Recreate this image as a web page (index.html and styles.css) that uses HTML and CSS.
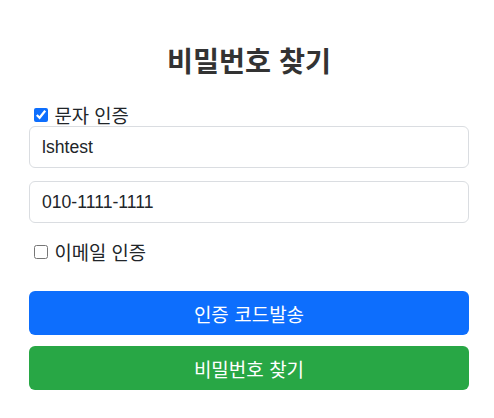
FILE: index.html
```html
<!DOCTYPE html>
<html lang="ko">
<head>
<meta charset="utf-8">
<link rel="stylesheet" href="styles.css">
</head>
<body>
<div class="wrap">
  <h2 class="title">비밀번호 찾기</h2>
  <form class="form">
    <label class="check-row"><input type="checkbox" class="check" checked> 문자 인증</label>
    <input type="text" class="field" value="lshtest">
    <input type="text" class="field field-gap" value="010-1111-1111">
    <label class="check-row check-email"><input type="checkbox" class="check"> 이메일 인증</label>
    <button type="button" class="btn btn-primary">인증 코드발송</button>
    <button type="button" class="btn btn-success">비밀번호 찾기</button>
  </form>
</div>
</body>
</html>
```

FILE: styles.css
```css
* { box-sizing: border-box; }
html, body { margin: 0; background: #fff; }
body {
  font-family: "Noto Sans CJK KR", "Noto Sans", "Liberation Sans", sans-serif;
  font-size: 18.8px;
  color: #212529;
}
.wrap {
  width: 440px;
  margin-left: 29px;
  padding-top: 43px;
}
.title {
  margin: 0 0 27px;
  text-align: center;
  font-size: 28.3px;
  font-weight: 700;
  color: #333;
  line-height: 1.2;
}
.form {
  display: flex;
  flex-direction: column;
}
.check-row {
  display: flex;
  align-items: center;
  line-height: 22px;
  height: 22px;
  color: #212529;
}
.check {
  width: 14px;
  height: 14px;
  margin: 0 7px 0 4.5px;
  accent-color: #0d6efd;
}
.field {
  height: 42.5px;
  margin-top: 0;
  padding: 0 12px;
  font-family: "Liberation Sans", Arial, sans-serif;
  font-size: 17.6px;
  color: #212529;
  border: 1px solid #dadde1;
  border-radius: 6px;
  background: #fff;
}
.field-gap { margin-top: 12.5px; }
.check-email { margin-top: 18px; }
.btn {
  height: 44px;
  border: none;
  border-radius: 6px;
  color: #fff;
  font-family: "Noto Sans CJK KR", sans-serif;
  font-size: 19px;
  cursor: pointer;
}
.btn-primary { background: #0d6efd; margin-top: 28px; }
.btn-success { background: #28a745; margin-top: 11px; }
```
